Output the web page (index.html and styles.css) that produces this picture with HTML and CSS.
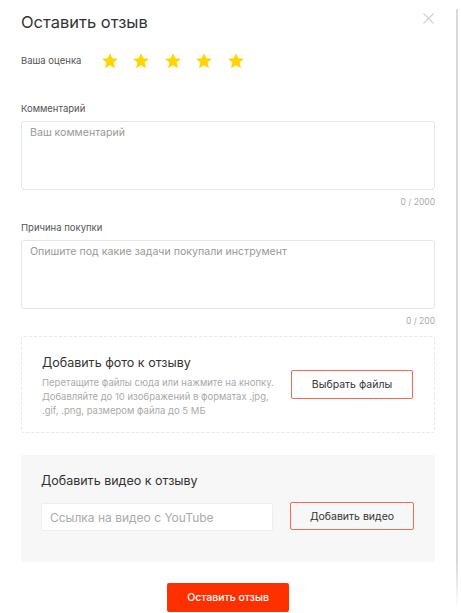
FILE: index.html
```html
<!DOCTYPE html>
<html lang="ru">
<head>
<meta charset="utf-8">
<link rel="stylesheet" href="styles.css">
</head>
<body>
<div class="page">
  <div class="modal">
    <div class="header">
      <h1 class="title">Оставить отзыв</h1>
      <span class="close">
        <svg width="11" height="11" viewBox="0 0 11 11"><path d="M0.5 0.5L10.5 10.5M10.5 0.5L0.5 10.5" stroke="#d2d2d2" stroke-width="1.2" fill="none"/></svg>
      </span>
    </div>
    <div class="rating">
      <span class="label">Ваша оценка</span>
      <div class="stars">
        <svg class="star" viewBox="0 0 24 24"><path d="M12 1.5l3.1 6.9 7.4.7-5.6 5 1.7 7.4L12 17.6l-6.6 3.9 1.7-7.4-5.6-5 7.4-.7z" fill="#ffd400"/></svg>
        <svg class="star" viewBox="0 0 24 24"><path d="M12 1.5l3.1 6.9 7.4.7-5.6 5 1.7 7.4L12 17.6l-6.6 3.9 1.7-7.4-5.6-5 7.4-.7z" fill="#ffd400"/></svg>
        <svg class="star" viewBox="0 0 24 24"><path d="M12 1.5l3.1 6.9 7.4.7-5.6 5 1.7 7.4L12 17.6l-6.6 3.9 1.7-7.4-5.6-5 7.4-.7z" fill="#ffd400"/></svg>
        <svg class="star" viewBox="0 0 24 24"><path d="M12 1.5l3.1 6.9 7.4.7-5.6 5 1.7 7.4L12 17.6l-6.6 3.9 1.7-7.4-5.6-5 7.4-.7z" fill="#ffd400"/></svg>
        <svg class="star" viewBox="0 0 24 24"><path d="M12 1.5l3.1 6.9 7.4.7-5.6 5 1.7 7.4L12 17.6l-6.6 3.9 1.7-7.4-5.6-5 7.4-.7z" fill="#ffd400"/></svg>
      </div>
    </div>

    <div class="field field-first">
      <div class="label">Комментарий</div>
      <div class="textarea"><span class="placeholder">Ваш комментарий</span></div>
      <div class="counter">0 / 2000</div>
    </div>

    <div class="field">
      <div class="label">Причина покупки</div>
      <div class="textarea"><span class="placeholder">Опишите под какие задачи покупали инструмент</span></div>
      <div class="counter">0 / 200</div>
    </div>

    <div class="photo-box">
      <div class="photo-text">
        <div class="box-title">Добавить фото к отзыву</div>
        <div class="photo-desc">Перетащите файлы сюда или нажмите на кнопку. Добавляйте до 10 изображений в форматах .jpg, .gif, .png, размером файла до 5 МБ</div>
      </div>
      <div class="btn-outline btn-files">Выбрать файлы</div>
    </div>

    <div class="video-box">
      <div class="box-title">Добавить видео к отзыву</div>
      <div class="video-row">
        <div class="video-input"><span class="placeholder-video">Ссылка на видео с YouTube</span></div>
        <div class="btn-outline btn-video">Добавить видео</div>
      </div>
    </div>

    <div class="submit-row">
      <div class="btn-submit">Оставить отзыв</div>
    </div>
  </div>
  <div class="scrollbar"></div>
</div>
</body>
</html>
```

FILE: styles.css
```css
* { box-sizing: border-box; }
html, body { margin: 0; padding: 0; background: #fff; }
body {
  font-family: Inter, "Noto Sans", "Liberation Sans", sans-serif;
  color: #333;
  width: 461px;
  height: 613px;
  overflow: hidden;
}
.page {
  display: flex;
  width: 461px;
  height: 613px;
}
.modal {
  width: 456px;
  padding-left: 21px;
}
.modal > * { width: 414px; }
.scrollbar {
  width: 2px;
  margin-top: 9px;
  height: 600px;
  background: linear-gradient(#d9d9d9 0%, #d9d9d9 92%, rgba(217,217,217,0) 100%);
}
.header {
  display: flex;
  justify-content: space-between;
  align-items: flex-start;
  padding-top: 12px;
}
.title {
  margin: 0;
  font-size: 16.5px;
  font-weight: 400;
  line-height: 20px;
  color: #333;
}
.close {
  display: block;
  margin-top: 1px;
  margin-right: 1px;
  width: 11px;
  height: 11px;
}
.close svg { display: block; }
.rating {
  display: flex;
  align-items: center;
  margin-top: 20px;
}
.label {
  font-size: 9.5px;
  color: #555;
  line-height: 12px;
}
.rating .label { width: 80px; }
.stars {
  display: flex;
  gap: 13.4px;
}
.star {
  width: 18px;
  height: 18px;
  display: block;
}
.field { margin-top: 15px; }
.field-first { margin-top: 33px; }
.field .label { margin-bottom: 6px; }
.textarea {
  height: 69px;
  border: 1px solid #e6e6e6;
  border-radius: 3px;
  padding: 4px 8px;
  font-size: 10.6px;
  line-height: 14px;
}
.placeholder {
  font-size: 10.6px;
  color: #999;
  line-height: 14px;
}
.counter {
  text-align: right;
  font-size: 8.5px;
  color: #aaa;
  margin-top: 7px;
  line-height: 10px;
}
.photo-box {
  margin-top: 10px;
  height: 97px;
  border: 1px dashed #e8e8e8;
  border-radius: 3px;
  display: flex;
  align-items: center;
  justify-content: space-between;
  padding: 0 21px 0 20px;
}
.photo-text { padding-top: 4px; }
.box-title {
  font-size: 12.5px;
  color: #333;
  line-height: 16px;
}
.photo-desc {
  margin-top: 5px;
  font-size: 9.5px;
  line-height: 14px;
  color: #aaa;
  width: 240px;
}
.btn-outline {
  border: 1px solid #f26a4f;
  border-radius: 2px;
  display: flex;
  align-items: center;
  justify-content: center;
  font-size: 10.5px;
  color: #333;
}
.btn-files {
  width: 122px;
  height: 29px;
}
.video-box {
  margin-top: 22px;
  background: #f7f7f7;
  border-radius: 2px;
  height: 107px;
  padding: 18px 21px 0 20px;
}
.video-row {
  display: flex;
  justify-content: space-between;
  margin-top: 14px;
}
.video-input {
  width: 232px;
  height: 28px;
  background: #fff;
  border: 1px solid #eeeeee;
  border-radius: 2px;
  display: flex;
  align-items: center;
  padding-left: 8px;
}
.placeholder-video {
  font-size: 12px;
  color: #aaa;
}
.btn-video {
  width: 124px;
  height: 28px;
  margin-top: -1px;
}
.submit-row {
  display: flex;
  justify-content: center;
  margin-top: 21px;
}
.btn-submit {
  width: 122px;
  height: 29px;
  background: #ff3000;
  color: #fff;
  font-size: 10.5px;
  font-weight: 500;
  border-radius: 2px;
  display: flex;
  align-items: center;
  justify-content: center;
}
```
